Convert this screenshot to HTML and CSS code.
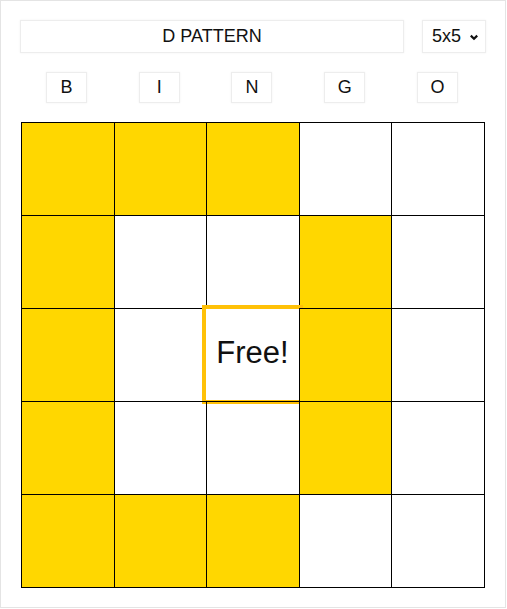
FILE: index.html
```html
<!DOCTYPE html>
<html>
<head>
<meta charset="utf-8">
<link rel="stylesheet" href="styles.css">
</head>
<body>
<div class="app">
  <div class="header">
    <div class="title">D PATTERN</div>
    <div class="select">5x5
      <svg class="chev" width="10" height="7" viewBox="0 0 10 7"><path d="M1.8 1.6 L5 4.8 L8.2 1.6" fill="none" stroke="#111" stroke-width="2.2"/></svg>
    </div>
  </div>
  <div class="letters">
    <div class="slot"><div class="letter">B</div></div>
    <div class="slot"><div class="letter">I</div></div>
    <div class="slot"><div class="letter">N</div></div>
    <div class="slot"><div class="letter">G</div></div>
    <div class="slot"><div class="letter">O</div></div>
  </div>
  <div class="board">
    <div class="cell on"></div><div class="cell on"></div><div class="cell on"></div><div class="cell"></div><div class="cell"></div>
    <div class="cell on"></div><div class="cell"></div><div class="cell"></div><div class="cell on"></div><div class="cell"></div>
    <div class="cell on"></div><div class="cell"></div><div class="cell free">Free!</div><div class="cell on"></div><div class="cell"></div>
    <div class="cell on"></div><div class="cell"></div><div class="cell"></div><div class="cell on"></div><div class="cell"></div>
    <div class="cell on"></div><div class="cell on"></div><div class="cell on"></div><div class="cell"></div><div class="cell"></div>
  </div>
</div>
</body>
</html>
```

FILE: styles.css
```css
* { box-sizing: border-box; }
body {
  margin: 0;
  font-family: "Liberation Sans", Arial, sans-serif;
  color: #111;
  background: #fff;
}
.app {
  width: 506px;
  height: 608px;
  border: 1px solid #e4e4e4;
  padding: 19px;
}
.header {
  display: flex;
  gap: 18px;
  height: 33px;
}
.title {
  flex: 1;
  border: 1px solid #ededed;
  box-shadow: 0 0 2px rgba(0,0,0,0.06);
  display: flex;
  align-items: center;
  justify-content: center;
  font-size: 18px;
}
.select {
  width: 64px;
  border: 1px solid #ededed;
  box-shadow: 0 0 2px rgba(0,0,0,0.06);
  display: flex;
  align-items: center;
  padding-left: 9px;
  gap: 8px;
  font-size: 18px;
}
.chev { margin-top: 1px; }
.letters {
  width: 464px;
  margin-top: 19px;
  display: grid;
  grid-template-columns: repeat(5, 1fr);
}
.slot {
  display: flex;
  justify-content: center;
}
.letter {
  width: 41px;
  height: 31px;
  border: 1px solid #ededed;
  box-shadow: 0 0 2px rgba(0,0,0,0.06);
  display: flex;
  align-items: center;
  justify-content: center;
  font-size: 18px;
}
.board {
  width: 464px;
  height: 466px;
  margin: 19px auto 0;
  display: grid;
  grid-template-columns: repeat(5, 1fr);
  grid-template-rows: repeat(5, 1fr);
  border-right: 1px solid #000;
  border-bottom: 1px solid #000;
}
.cell {
  border-left: 1px solid #000;
  border-top: 1px solid #000;
}
.cell.on { background: #ffd700; }
.cell.free {
  margin: -3px -4px -3px -4px;
  border: 4px solid #ffc107;
  display: flex;
  align-items: center;
  justify-content: center;
  padding-bottom: 3px;
  font-size: 31px;
}
```
